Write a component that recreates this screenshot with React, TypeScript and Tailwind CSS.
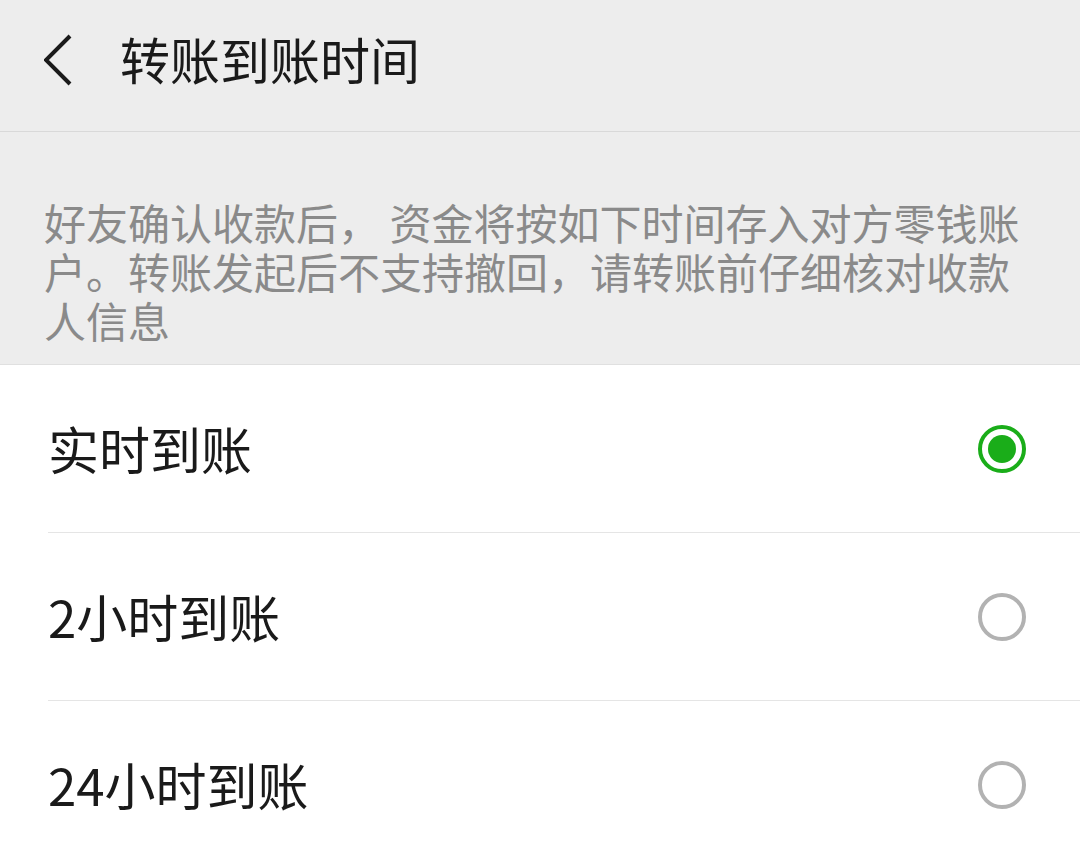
import React, { useState } from 'react';

const options = ['实时到账', '2小时到账', '24小时到账'];

const Radio: React.FC<{ checked: boolean }> = ({ checked }) =>
  checked ? (
    <span className="flex h-[48px] w-[48px] items-center justify-center rounded-full border-[4px] border-[#1aad19]">
      <span className="h-[28px] w-[28px] rounded-full bg-[#1aad19]" />
    </span>
  ) : (
    <span className="h-[48px] w-[48px] rounded-full border-[4px] border-[#b2b2b2]" />
  );

const App: React.FC = () => {
  const [selected, setSelected] = useState(0); // 当前选择

  return (
    <div
      className="min-h-screen w-full bg-white"
      style={{ fontFamily: '"Noto Sans CJK SC", "Noto Sans", sans-serif' }}
    >
      {/* Header */}
      <div className="flex h-[132px] items-center border-b border-[#d9d9d9] bg-[#ededed] pb-[12px]">
        <button className="ml-[44px] flex h-[52px] w-[30px] items-center">
          <svg width="30" height="52" viewBox="0 0 30 52" fill="none">
            <path d="M26 2 L2 26 L26 50" stroke="#1a1a1a" strokeWidth="4" strokeLinecap="butt" />
          </svg>
        </button>
        <h1 className="ml-[46px] mb-[4px] text-[50px] leading-none text-[#1a1a1a]">转账到账时间</h1>
      </div>

      {/* Description */}
      <div className="border-b border-[#e0e0e0] bg-[#ededed] px-[44px] pt-[65px] pb-[20px]">
        <p className="text-[42px] leading-[49px] text-[#8a8a8a]">
          好友确认收款后， 资金将按如下时间存入对方零钱账户。转账发起后不支持撤回，请转账前仔细核对收款人信息
        </p>
      </div>

      {/* Options */}
      <ul>
        {options.map((o, i) => (
          <li key={o} className="pl-[48px]" onClick={() => setSelected(i)}>
            <div className="flex h-[168px] items-center justify-between border-b border-[#e5e5e5] pr-[54px]">
              <span className="text-[51px] text-[#1a1a1a]">{o}</span>
              <Radio checked={selected === i} />
            </div>
          </li>
        ))}
      </ul>
    </div>
  );
};

export default App;
